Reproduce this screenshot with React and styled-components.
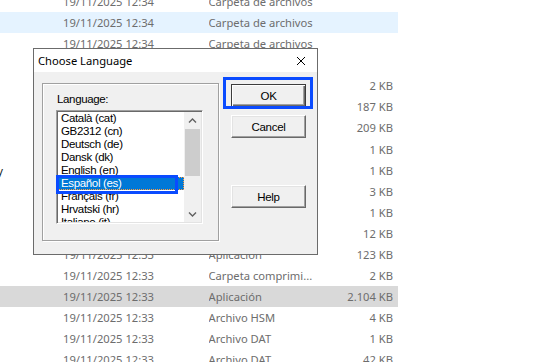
import React from 'react';
import styled, { createGlobalStyle, css } from 'styled-components';

const GlobalStyle = createGlobalStyle`
  html, body {
    margin: 0;
    padding: 0;
    background: #fff;
  }
  body {
    width: 534px;
    height: 362px;
    overflow: hidden;
  }
`;

const Page = styled.div`
  position: relative;
  width: 534px;
  height: 362px;
  overflow: hidden;
  background: #fff;
`;

/* explorer list behind the dialog */

const FileList = styled.div`
  display: flex;
  flex-direction: column;
  width: 398px;
  margin-top: -9.2px;
  font-family: "Noto Sans", sans-serif;
  font-size: 11.2px;
  color: #6d6d6d;
`;

const Row = styled.div`
  display: flex;
  align-items: center;
  flex: none;
  height: 21.1px;
  white-space: nowrap;
  background: ${p => (p.$hl === 'blue' ? '#e5f3ff' : p.$hl === 'gray' ? '#d9d9d9' : 'transparent')};
`;

const NameCell = styled.div`
  display: flex;
  justify-content: flex-end;
  width: 63px;
  padding-right: 60px;
  box-sizing: border-box;
  color: #1a1a1a;
`;

const DateCell = styled.div`
  width: 145.5px;
`;

const TypeCell = styled.div`
  width: 110px;
  overflow: hidden;
`;

const SizeCell = styled.div`
  width: 74.5px;
  text-align: right;
`;

/* dialog */

const Dialog = styled.div`
  position: absolute;
  left: 33px;
  top: 48px;
  width: 285px;
  height: 207px;
  box-sizing: border-box;
  border: 1px solid #6b6b6b;
  background: #f0f0f0;
  display: flex;
  flex-direction: column;
`;

const TitleBar = styled.div`
  display: flex;
  align-items: center;
  justify-content: space-between;
  height: 23px;
  padding: 0 11px 0 4px;
  background: #fff;
  font-family: "Noto Sans", sans-serif;
  font-size: 11.2px;
  color: #000;
`;

const DialogBody = styled.div`
  display: flex;
  align-items: flex-start;
  padding: 11px 0 0 8px;
  font-family: "Liberation Sans", Arial, sans-serif;
  font-size: 11.5px;
  letter-spacing: -0.35px;
  color: #000;
`;

const GroupBox = styled.div`
  display: flex;
  flex-direction: column;
  width: 177px;
  height: 158px;
  box-sizing: border-box;
  padding: 9px 0 0 13px;
  border: 1px solid #a0a0a0;
  box-shadow: inset 1px 1px 0 #fff, 1px 1px 0 #fff;
`;

const Label = styled.div`
  height: 13px;
  line-height: 13px;
  padding-left: 1px;
`;

const ListBox = styled.div`
  display: flex;
  width: 147px;
  height: 114px;
  box-sizing: border-box;
  margin-top: 4px;
  padding: 1px;
  background: #fff;
  border: 1px solid;
  border-color: #a0a0a0 #fff #fff #a0a0a0;
  box-shadow: inset 1px 1px 0 #696969, inset -1px -1px 0 #e3e3e3;
`;

const Items = styled.div`
  flex: 1;
  overflow: hidden;
`;

const Item = styled.div`
  height: 13px;
  line-height: 13px;
  padding-left: 3px;
  white-space: nowrap;
  ${p => p.$selected && css`
    background: #0078d7;
    color: #fff;
    outline: 1px dotted #ff9a3c;
    outline-offset: -1px;
  `}
`;

const ScrollBar = styled.div`
  display: flex;
  flex-direction: column;
  width: 17px;
  background: #f0f0f0;
`;

const ScrollArrow = styled.div`
  display: flex;
  align-items: center;
  justify-content: center;
  height: 17px;
  flex: none;
`;

const Thumb = styled.div`
  height: 47px;
  margin: 0 1px;
  background: #cdcdcd;
`;

const Track = styled.div`
  flex: 1;
`;

const ButtonColumn = styled.div`
  display: flex;
  flex-direction: column;
  margin-left: 12px;
`;

const Button = styled.button`
  width: 75px;
  height: 23px;
  box-sizing: border-box;
  margin-top: ${p => p.$gap}px;
  padding: 0;
  font-family: "Liberation Sans", Arial, sans-serif;
  font-size: 11.5px;
  letter-spacing: -0.3px;
  color: #000;
  background: #f0f0f0;
  border: 1px solid;
  border-color: #fff #696969 #696969 #fff;
  box-shadow: inset -1px -1px 0 #a0a0a0, inset 1px 1px 0 #e3e3e3;
  ${p => p.$default && css`
    border-color: #3c3c3c;
    box-shadow: inset 1px 1px 0 #fff, inset -1px -1px 0 #696969, inset -2px -2px 0 #a0a0a0;
  `}
`;

/* blue marker rectangles drawn over the screenshot */
const Marker = styled.div`
  position: absolute;
  left: ${p => p.$x}px;
  top: ${p => p.$y}px;
  width: ${p => p.$w}px;
  height: ${p => p.$h}px;
  box-sizing: border-box;
  border: 3px solid #0a4bff;
  pointer-events: none;
`;

// rows 3-11 sit under the dialog: only their sizes show
const rows = [
  { date: '19/11/2025 12:34', type: 'Carpeta de archivos' },
  { date: '19/11/2025 12:34', type: 'Carpeta de archivos', hl: 'blue' },
  { date: '19/11/2025 12:34', type: 'Carpeta de archivos' },
  {},
  { size: '2 KB' },
  { size: '187 KB' },
  { size: '209 KB' },
  { size: '1 KB' },
  { size: '1 KB', name: 'Dummy' },
  { size: '3 KB' },
  { size: '1 KB' },
  { size: '12 KB' },
  { date: '19/11/2025 12:33', type: 'Aplicación', size: '123 KB' },
  { date: '19/11/2025 12:33', type: 'Carpeta comprimi...', size: '2 KB' },
  { date: '19/11/2025 12:33', type: 'Aplicación', size: '2.104 KB', hl: 'gray' },
  { date: '19/11/2025 12:33', type: 'Archivo HSM', size: '4 KB' },
  { date: '19/11/2025 12:33', type: 'Archivo DAT', size: '1 KB' },
  { date: '19/11/2025 12:33', type: 'Archivo DAT', size: '42 KB' },
];

const languages = [
  'Català (cat)',
  'GB2312 (cn)',
  'Deutsch (de)',
  'Dansk (dk)',
  'English (en)',
  'Español (es)',
  'Français (fr)',
  'Hrvatski (hr)',
  'Italiano (it)',
];

function Chevron({ down }) {
  return (
    <svg width="9" height="6" viewBox="0 0 9 6">
      <path
        d={down ? 'M1 1.5 L4.5 5 L8 1.5' : 'M1 4.5 L4.5 1 L8 4.5'}
        fill="none"
        stroke="#606060"
        strokeWidth="1.4"
      />
    </svg>
  );
}

function CloseIcon() {
  return (
    <svg width="10" height="10" viewBox="0 0 10 10">
      <path d="M1 1 L9 9 M9 1 L1 9" stroke="#000" strokeWidth="1" fill="none" />
    </svg>
  );
}

export default function App() {
  return (
    <Page>
      <GlobalStyle />
      <FileList>
        {rows.map((r, i) => (
          <Row key={i} $hl={r.hl}>
            <NameCell>{r.name || ''}</NameCell>
            <DateCell>{r.date || ''}</DateCell>
            <TypeCell>{r.type || ''}</TypeCell>
            <SizeCell>{r.size || ''}</SizeCell>
          </Row>
        ))}
      </FileList>

      <Dialog>
        <TitleBar>
          <span>Choose Language</span>
          <CloseIcon />
        </TitleBar>
        <DialogBody>
          <GroupBox>
            <Label>Language:</Label>
            <ListBox>
              <Items>
                {languages.map(l => (
                  <Item key={l} $selected={l === 'Español (es)'}>{l}</Item>
                ))}
              </Items>
              <ScrollBar>
                <ScrollArrow><Chevron /></ScrollArrow>
                <Thumb />
                <Track />
                <ScrollArrow><Chevron down /></ScrollArrow>
              </ScrollBar>
            </ListBox>
          </GroupBox>
          <ButtonColumn>
            <Button $default $gap={1}>OK</Button>
            <Button $gap={8}>Cancel</Button>
            <Button $gap={47}>Help</Button>
          </ButtonColumn>
        </DialogBody>
      </Dialog>

      <Marker $x={223} $y={77} $w={90} $h={32} />
      <Marker $x={56} $y={175} $w={122} $h={19} />
    </Page>
  );
}
